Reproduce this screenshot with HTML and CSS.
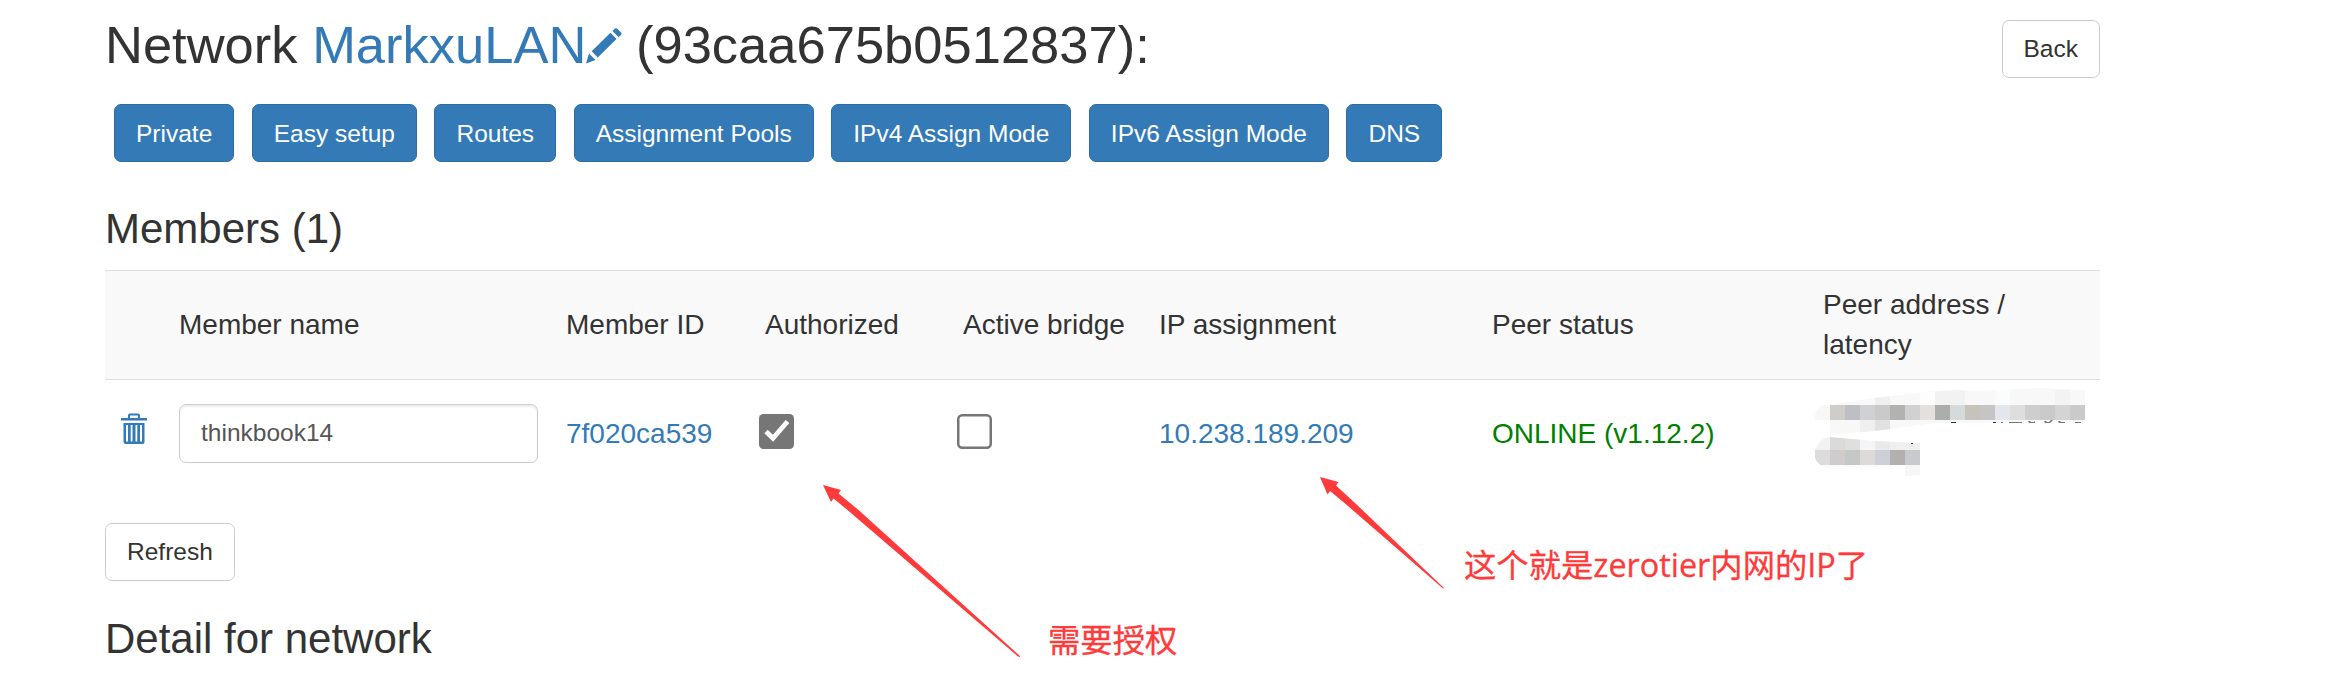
FILE: index.html
```html
<!DOCTYPE html>
<html lang="en">
<head>
<meta charset="utf-8">
<title>Network MarkxuLAN</title>
<link rel="stylesheet" href="styles.css">
</head>
<body>
<main class="container">
  <header class="page-head">
    <h2 class="title">Network <a class="link" href="#">MarkxuLAN<svg class="pencil" viewBox="0 0 36 36"><path d="M0 35.500 3 25.500 9.500 32ZM5.700 23.300 24.500 4.800 30.500 11 11.700 29.400ZM26.500 3 29 .6Q30 -.2 31 .6L35.300 4.800Q36 5.600 35.300 6.500L32.700 9.200Z"/></svg></a> (93caa675b0512837):</h2>
    <a class="btn btn-default" href="#">Back</a>
  </header>
  <nav class="actions">
    <a class="btn btn-primary" href="#">Private</a>
    <a class="btn btn-primary" href="#">Easy setup</a>
    <a class="btn btn-primary" href="#">Routes</a>
    <a class="btn btn-primary" href="#">Assignment Pools</a>
    <a class="btn btn-primary" href="#">IPv4 Assign Mode</a>
    <a class="btn btn-primary" href="#">IPv6 Assign Mode</a>
    <a class="btn btn-primary" href="#">DNS</a>
  </nav>
  <h3 class="section-title">Members (1)</h3>
  <table class="members">
    <colgroup><col class="c-del"><col class="c-name"><col class="c-id"><col class="c-auth"><col class="c-bridge"><col class="c-ip"><col class="c-status"><col class="c-peer"></colgroup>
    <tr class="head-row">
      <td></td><td>Member name</td><td>Member ID</td><td>Authorized</td><td>Active bridge</td><td>IP assignment</td><td>Peer status</td><td>Peer address / latency</td>
    </tr>
    <tr class="member-row">
      <td><svg class="trash" viewBox="0 0 26 31"><path d="M0 5H26V7.500H0ZM7 5V2.500Q7 .5 9 .5H17Q19 .5 19 2.500V5H17V2.500H9V5ZM2.500 10H23.500V29Q23.500 31 21.500 31H4.500Q2.500 31 2.500 29ZM5 12V28.500H7V12ZM9.700 12V28.500H11.500V12ZM14.500 12V28.500H16.300V12ZM19 12V28.500H21V12Z" fill-rule="evenodd"/></svg></td>
      <td><input class="field" type="text" value="thinkbook14" aria-label="Member name"></td>
      <td><a class="link" href="#">7f020ca539</a></td>
      <td><svg class="check" viewBox="0 0 35 35"><rect width="35" height="35" rx="4.500" fill="#767676"/><path d="M7 17.500 14 24.300 28.500 7.500" fill="none" stroke="#fff" stroke-width="4.800"/></svg></td>
      <td><svg class="check" viewBox="0 0 35 35"><rect x="1.250" y="1.250" width="32.500" height="32.500" rx="4" fill="#fff" stroke="#767676" stroke-width="2.500"/></svg></td>
      <td><a class="link" href="#">10.238.189.209</a></td>
      <td class="online">ONLINE (v1.12.2)</td>
      <td>
        <svg class="mosaic" viewBox="0 0 270 90">
          <clipPath id="stroke-a"><path d="M0 27Q2 15 12 15L60 8 110 2 140 0 160 1 225 -2 270 0V32L120 33 60 41 15 45V30H0Z"/></clipPath>
          <clipPath id="stroke-b"><path d="M0 60Q4 48 15 47L60 51 105 53V85L90 86V75L30 79Q4 80 0 68Z"/></clipPath>
          <g clip-path="url(#stroke-a)" shape-rendering="crispEdges">
            <path fill="#f8f8f8" d="M0 -3H270V45H0Z"/>
            <path fill="#efefef" d="M60 0h15v15h-15z"/><path fill="#fdfdfd" d="M105 0h15v15h-15z"/><path fill="#f2f2f2" d="M120 0h30v15h-30z"/><path fill="#fafdfc" d="M180 0h15v15h-15z"/><path fill="#f3f3f3" d="M240 0h15v15h-15z"/>
            <path fill="#f8f7f5" d="M0 15h15v15H0z"/><path fill="#cecdc9" d="M15 15h15v15H15z"/><path fill="#bdbfc4" d="M30 15h15v15H30z"/><path fill="#cfd1d4" d="M45 15h15v15H45z"/><path fill="#cacaca" d="M60 15h15v15H60z"/><path fill="#b2b2b0" d="M75 15h15v15H75z"/><path fill="#d1d1d1" d="M90 15h15v15H90z"/><path fill="#e4e0dd" d="M105 15h15v15h-15z"/><path fill="#acaeac" d="M120 15h15v15h-15z"/><path fill="#d5dadb" d="M135 15h15v15h-15z"/><path fill="#c8c2bd" d="M150 15h15v15h-15z"/><path fill="#c5c5c5" d="M165 15h15v15h-15z"/><path fill="#e3e7ed" d="M180 15h15v15h-15z"/><path fill="#dedede" d="M195 15h15v15h-15z"/><path fill="#cecece" d="M210 15h15v15h-15z"/><path fill="#cacaca" d="M225 15h15v15h-15z"/><path fill="#d4d4d4" d="M240 15h15v15h-15z"/><path fill="#cacaca" d="M255 15h15v15h-15z"/>
            <path fill="#efefef" d="M45 30h15v15H45z"/><path fill="#e1e1e1" d="M60 30h15v15H60z"/>
          </g>
          <g clip-path="url(#stroke-b)" shape-rendering="crispEdges">
            <path fill="#f2f2f2" d="M0 45h15v15H0z"/><path fill="#dadada" d="M15 45h15v15H15z"/><path fill="#e0dfdd" d="M30 45h15v15H30z"/><path fill="#f3f5f8" d="M45 45h15v15H45z"/><path fill="#eaeaea" d="M60 45h15v15H60z"/><path fill="#efefef" d="M75 45h30v15H75z"/>
            <path fill="#dcdcdc" d="M0 60h15v15H0z"/><path fill="#d1ccc9" d="M15 60h15v15H15z"/><path fill="#c5c8c6" d="M30 60h15v15H30z"/><path fill="#dcdbd9" d="M45 60h15v15H45z"/><path fill="#cdd1d7" d="M60 60h15v15H60z"/><path fill="#b2b1af" d="M75 60h15v15H75z"/><path fill="#c9cad0" d="M90 60h15v15H90z"/>
            <path fill="#fbfbfd" d="M0 75h90v6H0z"/><path fill="#f6f6f6" d="M90 75h15v15H90z"/>
          </g>
          <g fill="#777">
            <path fill="#333" d="M136 32h5v1h-5zM178 32h3v1h-3zM96 53h2v1h-2z"/>
            <path d="M186 32h2v1h-2zM194 32h13v1h-13zM213 31h2l1 1h3l1-1v2h-6zM229 31h2l1 1h2l2-2h2l-3 3h-5zM243 31h2l1 1h4v1h-6zM260 32h6v1h-6z"/>
          </g>
        </svg>
      </td>
    </tr>
  </table>
  <a class="btn btn-default refresh" href="#">Refresh</a>
  <h3 class="section-title detail">Detail for network</h3>
</main>
<svg class="overlay" viewBox="0 0 2339 674">
  <g fill="#fe3a3a">
    <path d="M823 485 841 490 838.500 493.500 858.500 510 1020 656 1020 657 1018 656.500 847.500 510 833.500 498.500 831 502Z"/>
    <path d="M1320 477 1338.500 482 1336 485.500 1355 503 1444 588 1443 588.500 1344.500 503 1330 491 1327.500 494.500Z"/>
  </g>
</svg>
<p class="note note-auth">需要授权</p>
<p class="note note-ip">这个就是zerotier内网的IP了</p>
</body>
</html>
```
FILE: styles.css
```css
* { box-sizing: border-box; }
body {
  margin: 0;
  height: 674px;
  overflow: hidden;
  position: relative;
  background: #fff;
  color: #333;
  font: 28px/40px "Liberation Sans", Arial, sans-serif;
}
.container { width: 1995px; margin-left: 105px; padding-top: 16px; }
.page-head { display: flex; justify-content: space-between; align-items: flex-start; height: 88px; }
.title { margin: 0; font-size: 52.5px; line-height: 57px; font-weight: 400; white-space: nowrap; }
.link { color: #337ab7; text-decoration: none; }
.pencil { width: 36px; height: 36px; margin-right: -1px; fill: #337ab7; vertical-align: -1px; overflow: visible; }
.btn {
  display: inline-block;
  height: 58px;
  padding: 10.5px 21px;
  border: 1px solid;
  border-radius: 7px;
  font-size: 24.5px;
  line-height: 35px;
  text-decoration: none;
  white-space: nowrap;
}
.btn-default { color: #333; background: #fff; border-color: #ccc; padding-top: 9.5px; }
.page-head .btn { margin-top: 4px; }
.btn-primary { color: #fff; background: #337ab7; border-color: #2e6da4; }
.actions { display: flex; gap: 17.5px; padding-left: 9px; }
.section-title { margin: 44px 0 0; font-size: 42px; line-height: 46px; font-weight: 400; }
.members { width: 1995px; margin-top: 18px; border-collapse: separate; border-spacing: 0; table-layout: fixed; }
.members td { height: 109px; padding: 14px 0 14px 14px; border-top: 1px solid #ddd; vertical-align: middle; }
.members .member-row td { padding-top: 0; padding-bottom: 0; }
.head-row { background: #f9f9f9; }
.c-del { width: 60px; }
.c-name { width: 387px; }
.c-id { width: 199px; }
.c-auth { width: 198px; }
.c-bridge { width: 196px; }
.c-ip { width: 333px; }
.c-status { width: 331px; }
.c-peer { width: 291px; }
.trash { display: block; width: 26px; height: 31px; margin: -11px 0 0 2px; fill: #337ab7; }
.field {
  display: block;
  width: 359px;
  height: 59px;
  margin: 0 0 2px;
  padding: 10px 21px;
  border: 1px solid #ccc;
  border-radius: 7px;
  box-shadow: inset 0 2px 2px rgba(0, 0, 0, .075);
  color: #555;
  background: #fff;
  font: 24.5px/35px "Liberation Sans", Arial, sans-serif;
}
.check { display: block; width: 35px; height: 35px; margin: -5px 0 0 -6px; }
.online { color: #008000; }
.mosaic { display: block; width: 270px; height: 90px; margin: 2px 0 0 -8px; overflow: visible; }
.refresh { display: block; width: 130px; margin-top: 35px; }
.detail { margin-top: 35px; }
.overlay { position: absolute; left: 0; top: 0; width: 2339px; height: 674px; pointer-events: none; }
.note {
  position: absolute;
  margin: 0;
  color: #fe3a3a;
  font: 32.35px/42px "Open Sans", "Noto Sans CJK SC", sans-serif;
  -webkit-text-stroke: .3px #fe3a3a;
  white-space: nowrap;
}
.note-auth { left: 1048px; top: 618px; }
.note-ip { left: 1464px; top: 543px; }
```
